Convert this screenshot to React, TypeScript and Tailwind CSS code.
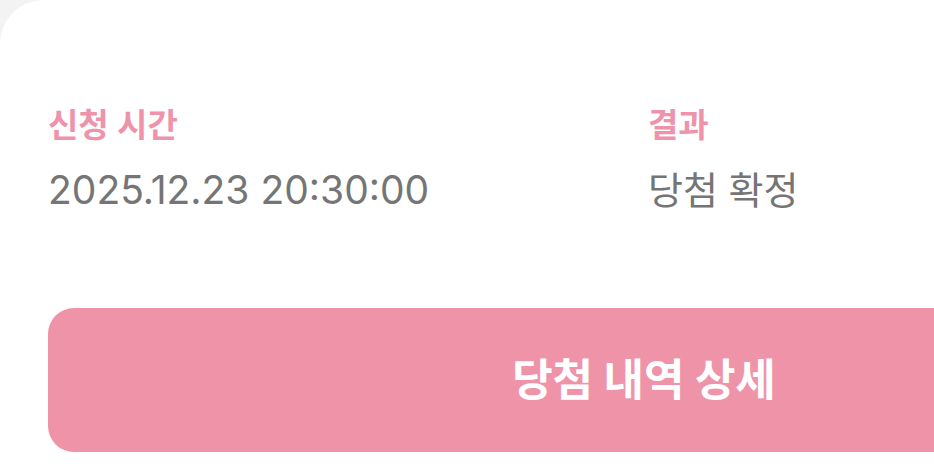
export default function App() {
    return (
        <div className="w-[934px] h-[470px] overflow-hidden bg-[#f3f3f3]">
            <div
                className="w-[1288px] h-[470px] bg-white rounded-tl-[44px] px-12 pt-[101px]"
                style={{ fontFamily: 'Inter, "Noto Sans CJK KR", sans-serif' }}
            >
                {/* Info Section */}
                <div className="grid grid-cols-2 gap-x-2">
                    <div className="flex flex-col">
                        <span className="text-[33px] leading-[48px] font-semibold text-[#ee93ab]">신청 시간</span>
                        <span className="mt-[17px] text-[39px] leading-[48px] text-[#757575]">2025.12.23 20:30:00</span>
                    </div>
                    <div className="flex flex-col">
                        <span className="text-[33px] leading-[48px] font-semibold text-[#ee93ab]">결과</span>
                        <span className="mt-[17px] text-[38px] leading-[48px] text-[#757575]">당첨 확정</span>
                    </div>
                </div>

                {/* Button Section */}
                <button className="mt-[94px] w-full h-[144px] rounded-[26px] bg-[#ef93a9] text-white text-[44px] font-bold">
                    당첨 내역 상세
                </button>
            </div>
        </div>
    )
}
